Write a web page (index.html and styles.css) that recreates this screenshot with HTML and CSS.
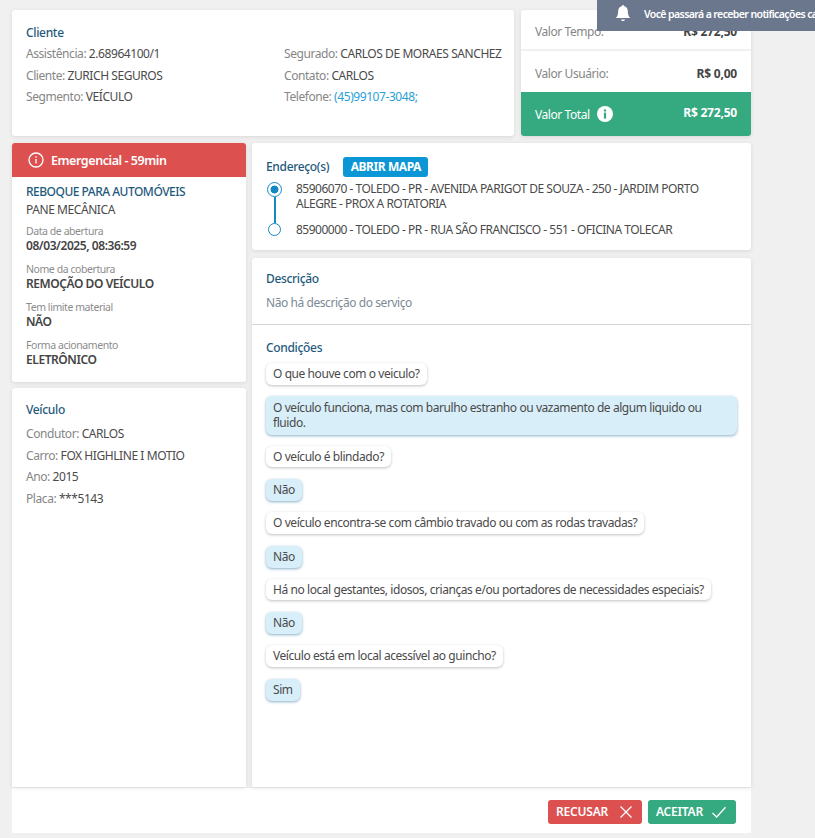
FILE: index.html
```html
<!DOCTYPE html>
<html lang="pt-BR">
<head>
<meta charset="utf-8">
<title>Serviço</title>
<link rel="stylesheet" href="styles.css">
</head>
<body>
<div class="toast">
  <svg class="bell" viewBox="0 0 16 16" width="16" height="16"><path fill="#fff" d="M8 16a2 2 0 0 0 2-1.6H6A2 2 0 0 0 8 16zM8 0a1 1 0 0 0-1 1.1C4.7 1.6 3.2 3.5 3.2 6c0 1 -.2 3.6-1.2 5.6-.4.8-1 1.2-1 1.4h14c0-.2-.6-.6-1-1.4-1-2-1.2-4.6-1.2-5.6 0-2.5-1.5-4.4-3.8-4.9A1 1 0 0 0 8 0z"/></svg>
  <span class="toast-text">Você passará a receber notificações ca</span>
</div>
<main class="page">
  <section class="top">
    <div class="card client">
      <h2 class="title">Cliente</h2>
      <div class="client-cols">
        <div class="col">
          <p class="row"><span class="lbl">Assistência:</span> 2.68964100/1</p>
          <p class="row"><span class="lbl">Cliente:</span> ZURICH SEGUROS</p>
          <p class="row"><span class="lbl">Segmento:</span> VEÍCULO</p>
        </div>
        <div class="col">
          <p class="row"><span class="lbl">Segurado:</span> CARLOS DE MORAES SANCHEZ</p>
          <p class="row"><span class="lbl">Contato:</span> CARLOS</p>
          <p class="row"><span class="lbl">Telefone:</span> <a class="link">(45)99107-3048;</a></p>
        </div>
      </div>
    </div>
    <div class="card values">
      <div class="val-row first"><span class="lbl">Valor Tempo:</span><b>R$ 272,50</b></div>
      <div class="val-row second"><span class="lbl">Valor Usuário:</span><b>R$ 0,00</b></div>
      <div class="val-total">
        <span class="vt-label">Valor Total
          <svg class="vt-icon" viewBox="0 0 16 16" width="16" height="16"><circle cx="8" cy="8" r="8" fill="#fff"/><circle cx="8" cy="4.4" r="1.2" fill="#35a97f"/><rect x="6.9" y="6.6" width="2.2" height="6" fill="#35a97f"/></svg>
        </span>
        <b>R$ 272,50</b>
      </div>
    </div>
  </section>
  <section class="body">
    <aside class="side">
      <div class="card service">
        <div class="alert">
          <svg viewBox="0 0 16 16" width="16" height="16" fill="none" stroke="#fff" stroke-width="1.3"><circle cx="8" cy="8" r="7"/><path d="M8 7v4.4M8 4.2v1.5"/></svg>
          <span>Emergencial - 59min</span>
        </div>
        <div class="service-body">
          <h2 class="title sv">REBOQUE PARA AUTOMÓVEIS</h2>
          <p class="sv-sub">PANE MECÂNICA</p>
          <div class="field"><small>Data de abertura</small><strong>08/03/2025, 08:36:59</strong></div>
          <div class="field"><small>Nome da cobertura</small><strong>REMOÇÃO DO VEÍCULO</strong></div>
          <div class="field"><small>Tem limite material</small><strong>NÃO</strong></div>
          <div class="field"><small>Forma acionamento</small><strong>ELETRÔNICO</strong></div>
        </div>
      </div>
      <div class="card vehicle">
        <h2 class="title">Veículo</h2>
        <p class="row"><span class="lbl">Condutor:</span> CARLOS</p>
        <p class="row"><span class="lbl">Carro:</span> FOX HIGHLINE I MOTIO</p>
        <p class="row"><span class="lbl">Ano:</span> 2015</p>
        <p class="row"><span class="lbl">Placa:</span> ***5143</p>
      </div>
    </aside>
    <div class="content">
      <div class="card address">
        <div class="addr-head"><h2 class="title">Endereço(s)</h2><span class="map-btn">ABRIR MAPA</span></div>
        <div class="stops">
          <div class="track">
            <span class="dot on"></span><span class="line"></span><span class="dot"></span>
          </div>
          <div class="stop-texts">
            <p>85906070 - TOLEDO - PR - AVENIDA PARIGOT DE SOUZA - 250 - JARDIM PORTO ALEGRE - PROX A ROTATORIA</p>
            <p>85900000 - TOLEDO - PR - RUA SÃO FRANCISCO - 551 - OFICINA TOLECAR</p>
          </div>
        </div>
      </div>
      <div class="card detail">
        <div class="desc">
          <h2 class="title">Descrição</h2>
          <p class="muted">Não há descrição do serviço</p>
        </div>
        <div class="cond">
          <h2 class="title">Condições</h2>
          <div class="bubble">O que houve com o veiculo?</div>
          <div class="bubble ans wide">O veículo funciona, mas com barulho estranho ou vazamento de algum liquido ou fluido.</div>
          <div class="bubble">O veículo é blindado?</div>
          <div class="bubble ans">Não</div>
          <div class="bubble">O veículo encontra-se com câmbio travado ou com as rodas travadas?</div>
          <div class="bubble ans">Não</div>
          <div class="bubble">Há no local gestantes, idosos, crianças e/ou portadores de necessidades especiais?</div>
          <div class="bubble ans">Não</div>
          <div class="bubble">Veículo está em local acessível ao guincho?</div>
          <div class="bubble ans">Sim</div>
        </div>
      </div>
    </div>
  </section>
  <footer class="actions">
    <button class="btn red">RECUSAR
      <svg viewBox="0 0 14 14" width="14" height="14" fill="none" stroke="#fff" stroke-width="1.3"><path d="M1.5 1.5l11 11M12.5 1.5l-11 11"/></svg>
    </button>
    <button class="btn green">ACEITAR
      <svg viewBox="0 0 16 14" width="16" height="14" fill="none" stroke="#fff" stroke-width="1.3"><path d="M1.5 8l4.2 4L14.5 2.2"/></svg>
    </button>
  </footer>
</main>
</body>
</html>
```
FILE: styles.css
```css
* { box-sizing: border-box; }
html, body { margin: 0; padding: 0; }
body {
  background: #f0f0f0;
  font-family: "Noto Sans", "Open Sans", sans-serif;
  font-size: 12px;
  letter-spacing: -.43px;
  color: #4a4a4a;
  height: 838px;
  overflow: hidden;
}
h2, p { margin: 0; }
.page { width: 739px; margin-left: 12px; padding-top: 10px; }
.card { background: #fff; border-radius: 3px; box-shadow: 0 1px 4px rgba(0,0,0,.1); }
.title { font-size: 12px; font-weight: 500; color: #1f5a7d; line-height: 16px; letter-spacing: -.33px; }
.lbl { color: #868686; }
.row { line-height: 21.5px; }
.link { color: #2a9fd6; }

.top { display: flex; gap: 7px; height: 126px; }
.client { width: 502px; flex: none; padding: 15px 14px; }
.client-cols { display: flex; margin-top: 2px; }
.col { width: 258px; flex: none; }
.values { flex: 1; display: flex; flex-direction: column; overflow: hidden; }
.val-row { display: flex; justify-content: space-between; align-items: center; padding: 0 14px; }
.val-row.first { height: 41px; align-items: flex-end; padding-bottom: 9px; border-bottom: 2px solid #f0f0f0; }
.val-row.second { height: 41px; padding-top: 3px; }
.val-row b { color: #444; font-weight: 700; letter-spacing: -.2px; }
.val-total { flex: 1; background: #35a97f; color: #fff; display: flex; justify-content: space-between; align-items: center; padding: 0 14px; }
.val-total b { font-weight: 700; letter-spacing: -.2px; margin-top: -4px; }
.vt-label { display: flex; align-items: center; gap: 7px; }

.body { display: flex; gap: 6px; margin-top: 7px; }
.side { width: 234px; flex: none; display: flex; flex-direction: column; gap: 6px; }
.alert { height: 34px; background: #dc5050; border-radius: 3px 3px 0 0; color: #fff; font-weight: 600; font-size: 12.5px; display: flex; align-items: center; gap: 7px; padding-left: 16px; }
.service { height: 239px; }
.service-body { padding: 7px 14px; }
.title.sv { letter-spacing: -.5px; }
.sv-sub { line-height: 20px; margin-bottom: 4px; }
.field { margin-bottom: 8px; }
.field small { display: block; font-size: 10.5px; color: #8c8c8c; line-height: 14px; }
.field strong { display: block; font-weight: 600; color: #444; line-height: 16px; }
.vehicle { height: 399px; padding: 14px; border-radius: 3px 3px 0 0; }
.vehicle .title { margin-bottom: 5px; }

.content { flex: 1; display: flex; flex-direction: column; gap: 8px; }
.address { height: 107px; padding: 14px; }
.addr-head { display: flex; align-items: center; gap: 14px; }
.map-btn { background: #0d96d6; color: #fff; font-weight: 700; font-size: 12px; padding: 0 7.5px; height: 20px; line-height: 20px; border-radius: 3px; }
.stops { display: flex; gap: 13px; margin-top: 4px; }
.track { width: 17px; flex: none; display: flex; flex-direction: column; align-items: center; padding-top: 1px; }
.dot { width: 13px; height: 13px; border: 1.5px solid #1487c5; border-radius: 50%; flex: none; background: #fff; }
.dot.on { background: radial-gradient(circle, #1487c5 0 3.8px, #fff 4.2px); width: 15px; height: 15px; }
.line { width: 2px; height: 26px; background: #1487c5; }
.stop-texts p { line-height: 15px; letter-spacing: -.5px; }
.stop-texts p + p { margin-top: 11px; }

.detail { height: 529px; border-radius: 3px 3px 0 0; }
.desc { height: 67px; padding: 13px 14px; border-bottom: 1px solid #d4d4d4; }
.muted { color: #7d8a96; margin-top: 7px; }
.cond { padding: 15px 14px; display: flex; flex-direction: column; align-items: flex-start; }
.bubble { background: #fff; border-radius: 6px; box-shadow: 0 1px 3px rgba(0,0,0,.25); padding: 3px 7px; line-height: 15.5px; margin-top: 11px; }
.cond .title + .bubble { margin-top: 7px; }
.bubble.ans { background: #d8eef8; margin-top: 12px; box-shadow: 0 1px 3px rgba(40,110,150,.55); padding: 3px 7px; line-height: 16px; }
.bubble.wide { width: 100%; margin-top: 11px; padding: 4px 20px 4px 7px; line-height: 15.5px; }

.actions { height: 46px; background: #fff; border-top: 1px solid #eee; display: flex; justify-content: flex-end; align-items: center; gap: 6px; padding: 2px 15px 0 0; }
.btn { border: 0; height: 24px; border-radius: 3px; color: #fff; font: 600 12px "Noto Sans", sans-serif; letter-spacing: -.2px; display: flex; align-items: center; justify-content: space-between; padding: 0 9px 0 8px; }
.red { background: #dc5050; width: 94px; }
.green { background: #35a97f; width: 88px; }

.toast { position: absolute; top: 0; left: 597px; right: 0; height: 31px; background: #6b778d; color: #fff; display: flex; align-items: center; padding-left: 18px; gap: 13px; overflow: hidden; white-space: nowrap; }
.bell { flex: none; margin-top: -6px; }
.toast-text { font-size: 10.5px; font-weight: 600; letter-spacing: -.6px; margin-top: -4px; }
```
